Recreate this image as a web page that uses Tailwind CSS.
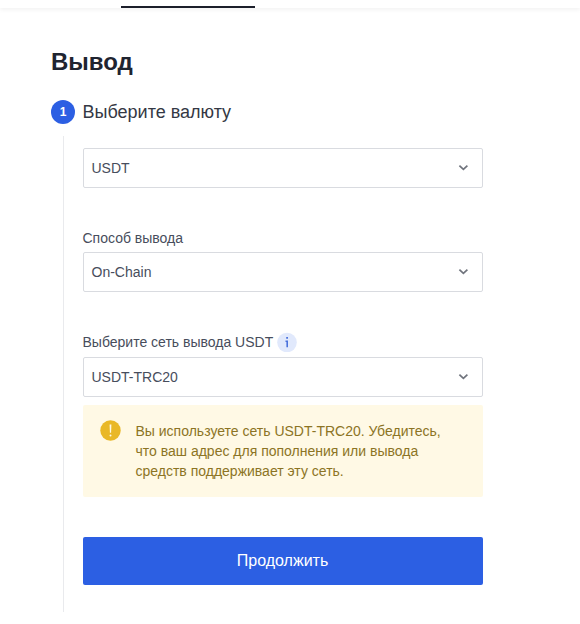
<!DOCTYPE html>
<html lang="ru">
<head>
<meta charset="utf-8">
<title>Вывод</title>
<script src="https://cdn.jsdelivr.net/npm/@tailwindcss/browser@4"></script>
</head>
<body class="h-[624px] overflow-hidden bg-white font-['Liberation_Sans',Arial,sans-serif] text-sm text-[#474d5c]">
  <header class="flex h-2 items-end bg-white pl-[121px] shadow-[0_2px_4px_rgba(0,0,0,0.05)]">
    <div class="h-0.5 w-[134px] bg-[#1c1f2b]"></div>
  </header>
  <main class="w-[483px] pl-[51px] pt-[38px]">
    <h1 class="h-8 text-2xl leading-8 font-bold text-[#1f2430]">Вывод</h1>
    <section class="mt-[22px]">
      <div class="flex h-6 items-center gap-[7.5px]">
        <span class="flex size-6 items-center justify-center rounded-full bg-[#2c5fe3] text-xs font-bold text-white">1</span>
        <h2 class="text-lg leading-6 text-[#343844]">Выберите валюту</h2>
      </div>
      <div class="mt-3 ml-3 h-[476px] border-l border-[#e9eaed] pt-3 pl-[19px]">
        <button class="flex h-10 w-full items-center justify-between rounded-[2px] border border-[#d9dbe0] pr-[13px] pl-[7.5px]">
          <span>USDT</span>
          <svg class="size-3" viewBox="0 0 12 12" fill="none" stroke="#70747d" stroke-width="1.7"><path d="M2.4 3.6 6.4 7.4 10.4 3.6"/></svg>
        </button>
        <div class="mt-10 -ml-[0.5px] flex h-6 items-center pb-1">Способ вывода</div>
        <button class="flex h-10 w-full items-center justify-between rounded-[2px] border border-[#d9dbe0] pr-[13px] pl-[7.5px]">
          <span>On-Chain</span>
          <svg class="size-3" viewBox="0 0 12 12" fill="none" stroke="#70747d" stroke-width="1.7"><path d="M2.4 3.6 6.4 7.4 10.4 3.6"/></svg>
        </button>
        <div class="mt-10 -ml-[0.5px] flex h-[25px] items-center gap-[3.5px] pb-[5px]">
          <span>Выберите сеть вывода USDT</span>
          <svg class="size-5 shrink-0" viewBox="0 0 20 20"><circle cx="10" cy="10.5" r="9.8" fill="#e1e9fc"/><path d="M9.2 5h1.8v1.8H9.2zM8.5 8.6H11v6.6H9.4V9.9h-.9z" fill="#4a72dc"/></svg>
        </div>
        <button class="flex h-10 w-full items-center justify-between rounded-[2px] border border-[#d9dbe0] pr-[13px] pl-[7.5px]">
          <span>USDT-TRC20</span>
          <svg class="size-3" viewBox="0 0 12 12" fill="none" stroke="#70747d" stroke-width="1.7"><path d="M2.4 3.6 6.4 7.4 10.4 3.6"/></svg>
        </button>
        <div class="mt-2 flex h-[92px] gap-[14.5px] rounded-[2px] bg-[#fff9e5] pt-4 pl-[17px] leading-5 text-[#8c7424]">
          <svg class="mt-[-1px] size-[21px] shrink-0" viewBox="0 0 21 21"><circle cx="10.5" cy="10.5" r="10.2" fill="#e9b827"/><path d="M9.6 4.5h1.8l-.3 8.3H9.9z" fill="#fff9e5"/><circle cx="10.5" cy="15.4" r="1" fill="#fff9e5"/></svg>
          <p>Вы используете сеть USDT-TRC20. Убедитесь,<br>что ваш адрес для пополнения или вывода<br>средств поддерживает эту сеть.</p>
        </div>
        <button class="mt-10 h-12 w-full rounded-[2px] bg-[#2c5fe3] pr-px text-base text-white">Продолжить</button>
      </div>
    </section>
  </main>
</body>
</html>
